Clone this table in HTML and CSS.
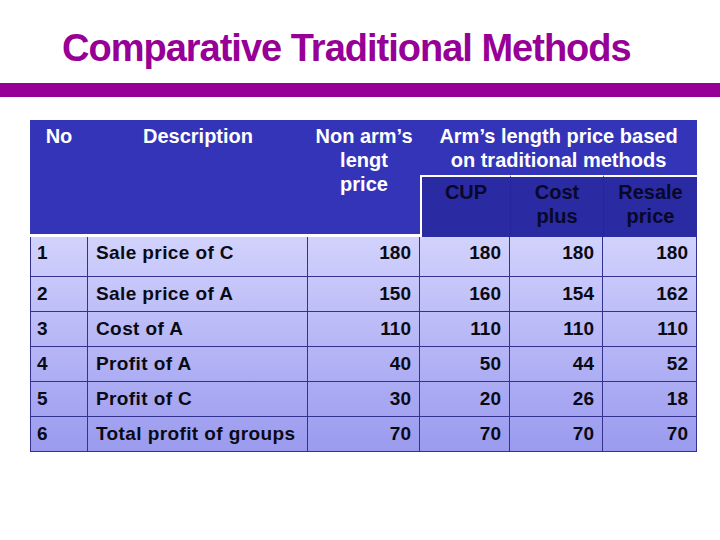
FILE: index.html
```html
<!DOCTYPE html>
<html lang="en">
<head>
<meta charset="utf-8">
<title>Comparative Traditional Methods</title>
<link rel="stylesheet" href="styles.css">
</head>
<body>
<div class="slide">
  <h1 class="title">Comparative Traditional Methods</h1>
  <div class="rule"></div>
  <div class="table">
    <div class="head">
      <div class="h h-no">No</div>
      <div class="h h-desc">Description</div>
      <div class="h h-non">Non arm’s<br>lengt<br>price</div>
      <div class="h h-arm">Arm’s length price based<br>on traditional methods</div>
      <div class="sub sub-cup">CUP</div>
      <div class="sub sub-cost">Cost<br>plus</div>
      <div class="sub sub-resale">Resale<br>price</div>
    </div>
    <div class="body">
      <div class="row first">
        <div class="c no">1</div><div class="c desc">Sale price of C</div>
        <div class="c num">180</div><div class="c num">180</div><div class="c num">180</div><div class="c num">180</div>
      </div>
      <div class="row">
        <div class="c no">2</div><div class="c desc">Sale price of A</div>
        <div class="c num">150</div><div class="c num">160</div><div class="c num">154</div><div class="c num">162</div>
      </div>
      <div class="row">
        <div class="c no">3</div><div class="c desc">Cost of A</div>
        <div class="c num">110</div><div class="c num">110</div><div class="c num">110</div><div class="c num">110</div>
      </div>
      <div class="row">
        <div class="c no">4</div><div class="c desc">Profit of A</div>
        <div class="c num">40</div><div class="c num">50</div><div class="c num">44</div><div class="c num">52</div>
      </div>
      <div class="row">
        <div class="c no">5</div><div class="c desc">Profit of C</div>
        <div class="c num">30</div><div class="c num">20</div><div class="c num">26</div><div class="c num">18</div>
      </div>
      <div class="row">
        <div class="c no">6</div><div class="c desc">Total profit of groups</div>
        <div class="c num">70</div><div class="c num">70</div><div class="c num">70</div><div class="c num">70</div>
      </div>
    </div>
  </div>
</div>
</body>
</html>
```

FILE: styles.css
```css
html, body {
  margin: 0;
  padding: 0;
  background: #ffffff;
}
.slide {
  width: 720px;
  height: 540px;
  font-family: "Liberation Sans", Arial, sans-serif;
  font-weight: bold;
}
.title {
  margin: 0;
  padding: 28px 0 0 62px;
  height: 55px;
  box-sizing: border-box;
  font-size: 38px;
  line-height: 40px;
  letter-spacing: -1px;
  color: #960096;
  font-weight: bold;
}
.rule {
  margin-top: 28px;
  height: 14px;
  background: #960096;
}
.table {
  margin: 23px 0 0 30px;
  width: 667px;
}
.head {
  display: grid;
  grid-template-columns: 58px 220px 112px 90px 93px 94px;
  grid-template-rows: 55px 62px;
  background: #3434b9;
  color: #ffffff;
  font-size: 20px;
  line-height: 24px;
}
.h {
  text-align: center;
  padding-top: 4px;
}
.h-no, .h-desc, .h-non {
  grid-row: 1 / 3;
  border-bottom: 3px solid #ffffff;
}
.h-no { grid-column: 1; }
.h-desc { grid-column: 2; }
.h-non { grid-column: 3; }
.h-arm { grid-column: 4 / 7; grid-row: 1; }
.sub {
  grid-row: 2;
  background: #2a2aa2;
  border-top: 2px solid #ffffff;
  color: #080828;
  text-align: center;
  padding-top: 3px;
}
.sub-cup {
  grid-column: 4;
  border-left: 2px solid #ffffff;
}
.sub-cost {
  grid-column: 5;
  border-left: 1px solid #26269a;
}
.sub-resale {
  grid-column: 6;
  border-left: 1px solid #26269a;
}
.body {
  background: linear-gradient(#d2d2fd, #9a9aef);
  border-left: 1px solid #33338f;
  color: #0a0a14;
  font-size: 19px;
  line-height: 20px;
}
.row {
  display: grid;
  grid-template-columns: 57px 220px 112px 90px 93px 94px;
  height: 35px;
}
.row.first {
  height: 40px;
}
.c {
  border-right: 1px solid #33338f;
  border-bottom: 1px solid #33338f;
  padding-top: 7px;
}
.first .c {
  padding-top: 6px;
}
.no {
  padding-left: 6px;
}
.desc {
  padding-left: 8px;
  letter-spacing: 0.4px;
}
.num {
  text-align: right;
  padding-right: 8px;
}
```
